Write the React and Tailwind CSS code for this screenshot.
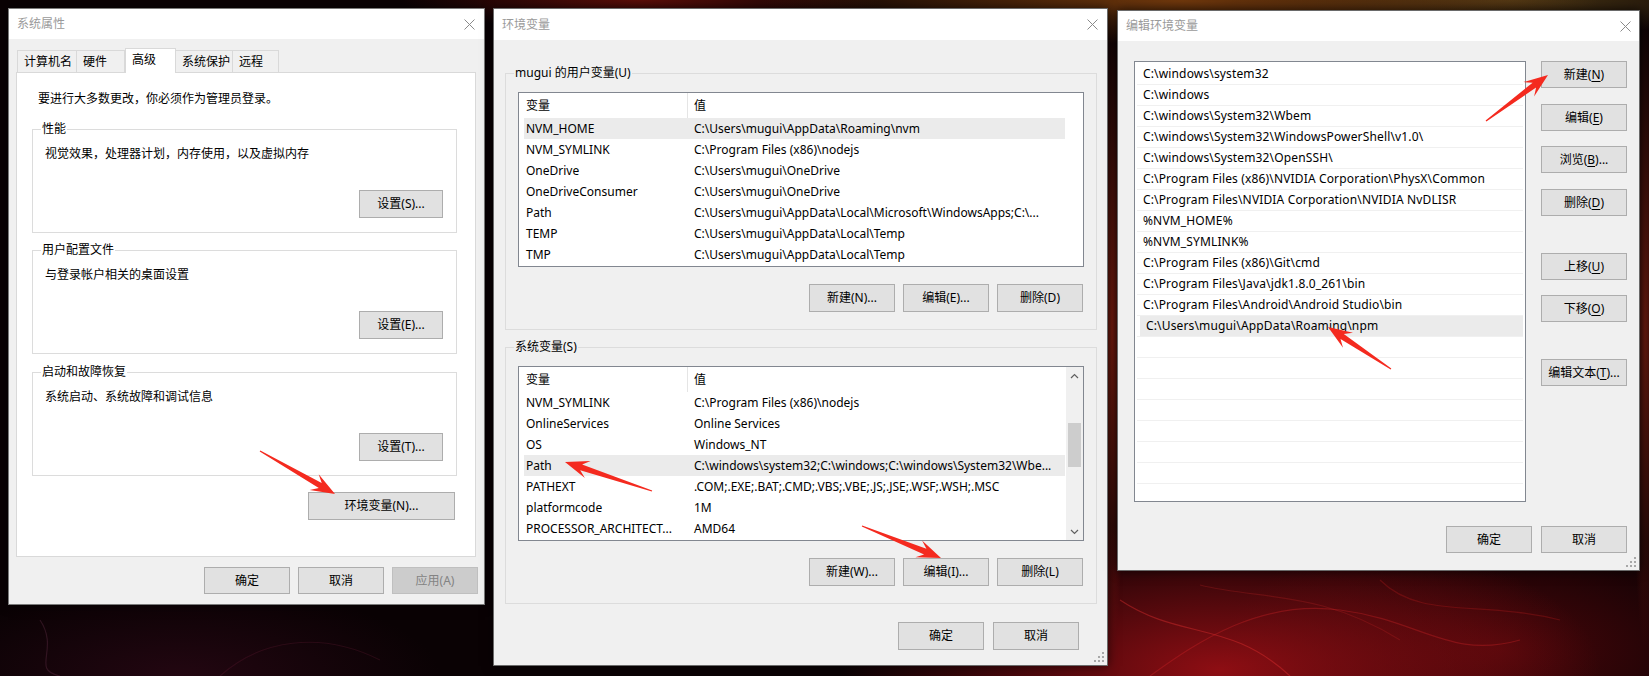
import React from 'react';

const userVars = [
  ['NVM_HOME', 'C:\\Users\\mugui\\AppData\\Roaming\\nvm'],
  ['NVM_SYMLINK', 'C:\\Program Files (x86)\\nodejs'],
  ['OneDrive', 'C:\\Users\\mugui\\OneDrive'],
  ['OneDriveConsumer', 'C:\\Users\\mugui\\OneDrive'],
  ['Path', 'C:\\Users\\mugui\\AppData\\Local\\Microsoft\\WindowsApps;C:\\...'],
  ['TEMP', 'C:\\Users\\mugui\\AppData\\Local\\Temp'],
  ['TMP', 'C:\\Users\\mugui\\AppData\\Local\\Temp'],
];

const sysVars = [
  ['NVM_SYMLINK', 'C:\\Program Files (x86)\\nodejs'],
  ['OnlineServices', 'Online Services'],
  ['OS', 'Windows_NT'],
  ['Path', 'C:\\windows\\system32;C:\\windows;C:\\windows\\System32\\Wbe...'],
  ['PATHEXT', '.COM;.EXE;.BAT;.CMD;.VBS;.VBE;.JS;.JSE;.WSF;.WSH;.MSC'],
  ['platformcode', '1M'],
  ['PROCESSOR_ARCHITECT...', 'AMD64'],
];

const pathItems = [
  'C:\\windows\\system32',
  'C:\\windows',
  'C:\\windows\\System32\\Wbem',
  'C:\\windows\\System32\\WindowsPowerShell\\v1.0\\',
  'C:\\windows\\System32\\OpenSSH\\',
  'C:\\Program Files (x86)\\NVIDIA Corporation\\PhysX\\Common',
  'C:\\Program Files\\NVIDIA Corporation\\NVIDIA NvDLISR',
  '%NVM_HOME%',
  '%NVM_SYMLINK%',
  'C:\\Program Files (x86)\\Git\\cmd',
  'C:\\Program Files\\Java\\jdk1.8.0_261\\bin',
  'C:\\Program Files\\Android\\Android Studio\\bin',
  'C:\\Users\\mugui\\AppData\\Roaming\\npm',
];

// annotation arrows, page coordinates: tail -> tip
const arrows = [
  [260, 451, 335, 494],
  [652, 491, 565, 462],
  [862, 526, 941, 558],
  [1486, 121, 1548, 75],
  [1391, 369, 1328, 327],
];

const arrowPoints = ([x1, y1, x2, y2]) => {
  const dx = x2 - x1, dy = y2 - y1;
  const L = Math.hypot(dx, dy);
  const ux = dx / L, uy = dy / L;
  const nx = -uy, ny = ux;
  const h = 21, hw = 9, sw = 3, tw = 0.6;
  const bx = x2 - ux * h, by = y2 - uy * h;
  const pts = [
    [x1 + nx * tw, y1 + ny * tw],
    [bx + ux * 4 + nx * sw, by + uy * 4 + ny * sw],
    [bx - ux * 3 + nx * hw, by - uy * 3 + ny * hw],
    [x2, y2],
    [bx - ux * 3 - nx * hw, by - uy * 3 - ny * hw],
    [bx + ux * 4 - nx * sw, by + uy * 4 - ny * sw],
    [x1 - nx * tw, y1 - ny * tw],
  ];
  return pts.map((p) => p[0].toFixed(1) + ',' + p[1].toFixed(1)).join(' ');
};

const CloseX = () => (
  <svg width="11" height="11" viewBox="0 0 11 11">
    <path d="M0.5 0.5 L10.5 10.5 M10.5 0.5 L0.5 10.5" stroke="#8a8a8a" strokeWidth="1" fill="none" />
  </svg>
);

const Grip = () => (
  <svg width="10" height="10" viewBox="0 0 10 10" className="absolute right-[3px] bottom-[3px]">
    <g fill="#a8a8a8">
      <rect x="8" y="0" width="2" height="2" />
      <rect x="4" y="4" width="2" height="2" />
      <rect x="8" y="4" width="2" height="2" />
      <rect x="0" y="8" width="2" height="2" />
      <rect x="4" y="8" width="2" height="2" />
      <rect x="8" y="8" width="2" height="2" />
    </g>
  </svg>
);

const Btn = ({ w = 'w-[86px]', h = 'h-[28px]', disabled = false, children }) => (
  <div
    className={`${w} ${h} flex items-center justify-center border text-[12px] leading-none whitespace-nowrap ${
      disabled ? 'bg-[#cccccc] border-[#bfbfbf] text-[#838383]' : 'bg-[#e1e1e1] border-[#adadad] text-black'
    }`}
  >
    {children}
  </div>
);

const U = ({ children }) => <span className="underline underline-offset-2">{children}</span>;

const TitleBar = ({ title, h, pr }) => (
  <div className={`${h} bg-white flex items-center justify-between pl-[8px] ${pr} shrink-0`}>
    <span className="text-[12px] text-[#9a9a9a]">{title}</span>
    <CloseX />
  </div>
);

const Group = ({ label, labelBg, className, children }) => (
  <div className={`relative border border-[#dcdcdc] ${className}`}>
    <span className={`absolute -top-[9px] left-[8px] px-[1px] text-[12px] leading-4 ${labelBg}`}>{label}</span>
    {children}
  </div>
);

const Chevron = ({ up }) => (
  <svg width="9" height="6" viewBox="0 0 9 6">
    <path d={up ? 'M1 5 L4.5 1.5 L8 5' : 'M1 1 L4.5 4.5 L8 1'} stroke="#606060" strokeWidth="1.2" fill="none" />
  </svg>
);

const VarList = ({ rows, selected, scroll }) => (
  <div className="w-[566px] h-[175px] border border-[#828790] bg-white flex overflow-hidden">
    <div className="w-[547px] shrink-0 flex flex-col">
      <div className="h-[25px] flex items-center shrink-0">
        <div className="w-[169px] h-full flex items-center pl-[7px] border-r border-[#e5e5e5]">变量</div>
        <div className="pl-[6px]">值</div>
      </div>
      {rows.map(([k, v], i) => (
        <div
          key={k + i}
          className={`ml-[5px] w-[541px] h-[21px] shrink-0 flex items-center whitespace-nowrap ${
            i === selected ? 'bg-[#ebebeb]' : ''
          }`}
        >
          <div className="w-[164px] pl-[2px] overflow-hidden">{k}</div>
          <div className="flex-1 pl-[6px] overflow-hidden">{v}</div>
        </div>
      ))}
    </div>
    {scroll && (
      <div className="w-[17px] ml-auto h-full bg-[#f0f0f0] flex flex-col items-center">
        <div className="h-[17px] flex items-center justify-center">
          <Chevron up />
        </div>
        <div className="flex-1 w-full flex flex-col items-center">
          <div className="mt-[39px] w-[13px] h-[44px] bg-[#cdcdcd]" />
        </div>
        <div className="h-[17px] flex items-center justify-center">
          <Chevron />
        </div>
      </div>
    )}
  </div>
);

const tabs = [
  ['计算机名', 'w-[60px]'],
  ['硬件', 'w-[48px]'],
  ['高级', 'w-[51px]'],
  ['系统保护', 'w-[57px]'],
  ['远程', 'w-[46px]'],
];

const SystemProps = () => (
  <div className="absolute left-[8px] top-[8px] w-[477px] h-[597px] border border-[#7a7a7a] bg-[#f0f0f0] flex flex-col shadow-[0_0_10px_rgba(0,0,0,0.6)]">
    <TitleBar title="系统属性" h="h-[30px]" pr="pr-[9px]" />
    <div className="flex flex-col pt-[9px]">
      <div className="flex ml-[7px] pl-[1px] h-[25px] relative z-10">
        {tabs.map(([t, w], i) =>
          i === 2 ? (
            <div key={t} className={`${w} h-[25px] bg-white border border-b-0 border-[#d9d9d9] flex items-center pl-[6px] pb-[2px]`}>
              {t}
            </div>
          ) : (
            <div key={t} className={`${w} h-[22px] mt-[2px] border border-b-0 border-[#d9d9d9] flex items-center pl-[6px] ${i === 1 || i === 3 || i === 4 ? 'border-l-0' : ''}`}>
              {t}
            </div>
          )
        )}
      </div>
      <div className="ml-[7px] -mt-px w-[460px] h-[485px] border border-[#d9d9d9] bg-white flex flex-col pl-[15px]">
        <p className="mt-[18px] ml-[6px] leading-4">要进行大多数更改，你必须作为管理员登录。</p>
        {[
          ['性能', '视觉效果，处理器计划，内存使用，以及虚拟内存', '设置(S)...', 'mt-[22px]'],
          ['用户配置文件', '与登录帐户相关的桌面设置', '设置(E)...', 'mt-[17px]'],
          ['启动和故障恢复', '系统启动、系统故障和调试信息', '设置(T)...', 'mt-[18px]'],
        ].map(([label, text, btn, mt]) => (
          <Group key={label} label={label} labelBg="bg-white" className={`${mt} w-[425px] h-[104px] flex flex-col`}>
            <p className="pt-[16px] pl-[12px] leading-4">{text}</p>
            <div className="mt-[28px] self-end mr-[13px]">
              <Btn w="w-[84px]">{btn}</Btn>
            </div>
          </Group>
        ))}
        <div className="mt-[16px] ml-[276px]">
          <Btn w="w-[147px]">环境变量(N)...</Btn>
        </div>
      </div>
      <div className="mt-[10px] flex justify-end gap-[8px] pr-[6px]">
        <Btn h="h-[27px]">确定</Btn>
        <Btn h="h-[27px]">取消</Btn>
        <Btn h="h-[27px]" disabled>应用(A)</Btn>
      </div>
    </div>
  </div>
);

const EnvVars = () => (
  <div className="absolute left-[493px] top-[8px] w-[615px] h-[658px] border border-[#6a6a6a] bg-[#f0f0f0] flex flex-col shadow-[0_0_10px_rgba(0,0,0,0.6)]">
    <TitleBar title="环境变量" h="h-[31px]" pr="pr-[9px]" />
    <div className="flex flex-col pt-[33px] pl-[11px]">
      <Group label="mugui 的用户变量(U)" labelBg="bg-[#f0f0f0]" className="w-[592px] h-[257px] flex flex-col pt-[18px] pl-[12px]">
        <VarList rows={userVars} selected={0} />
        <div className="mt-[17px] flex justify-end gap-[8px] pr-[13px]">
          <Btn>新建(N)...</Btn>
          <Btn>编辑(E)...</Btn>
          <Btn>删除(D)</Btn>
        </div>
      </Group>
      <Group label="系统变量(S)" labelBg="bg-[#f0f0f0]" className="mt-[17px] w-[592px] h-[257px] flex flex-col pt-[18px] pl-[12px]">
        <VarList rows={sysVars} selected={3} scroll />
        <div className="mt-[17px] flex justify-end gap-[8px] pr-[13px]">
          <Btn>新建(W)...</Btn>
          <Btn>编辑(I)...</Btn>
          <Btn>删除(L)</Btn>
        </div>
      </Group>
      <div className="mt-[18px] flex justify-end gap-[9px] pr-[28px]">
        <Btn>确定</Btn>
        <Btn>取消</Btn>
      </div>
    </div>
    <Grip />
  </div>
);

const sideButtons = [
  [<>新建(<U>N</U>)</>, 'mt-0'],
  [<>编辑(<U>E</U>)</>, 'mt-[16px]'],
  [<>浏览(<U>B</U>)...</>, 'mt-[15px]'],
  [<>删除(<U>D</U>)</>, 'mt-[16px]'],
  [<>上移(<U>U</U>)</>, 'mt-[37px]'],
  [<>下移(<U>O</U>)</>, 'mt-[15px]'],
  [<>编辑文本(<U>T</U>)...</>, 'mt-[37px]'],
];

const EditEnv = () => (
  <div className="absolute left-[1117px] top-[10px] w-[523px] h-[561px] border border-[#6a6a6a] bg-[#f0f0f0] flex flex-col shadow-[0_0_10px_rgba(0,0,0,0.6)]">
    <TitleBar title="编辑环境变量" h="h-[30px]" pr="pr-[8px]" />
    <div className="flex pt-[20px] pl-[16px]">
      <div className="w-[392px] h-[441px] border border-[#828790] bg-white flex flex-col pt-[2px] overflow-hidden">
        {Array.from({ length: 21 }).map((_, i) => (
          <div key={i} className="mx-[2px] h-[21px] shrink-0 border-b border-[#f0f0f0] flex">
            <div
              className={`flex-1 flex items-center pl-[6px] whitespace-nowrap overflow-hidden tracking-[0.15px] ${
                i === 12 ? 'bg-[#ebebeb] ml-[3px] pl-[3px]' : ''
              }`}
            >
              {pathItems[i] || ''}
            </div>
          </div>
        ))}
      </div>
      <div className="ml-[15px] flex flex-col">
        {sideButtons.map(([label, mt], i) => (
          <div key={i} className={mt}>
            <Btn h="h-[27px]">{label}</Btn>
          </div>
        ))}
      </div>
    </div>
    <div className="mt-[24px] flex justify-end gap-[9px] pr-[12px]">
      <Btn h="h-[27px]">确定</Btn>
      <Btn h="h-[27px]">取消</Btn>
    </div>
    <Grip />
  </div>
);

export default function App() {
  return (
    <div className="relative w-[1649px] h-[676px] overflow-hidden bg-[#0a0204] text-[12px] text-black font-['Noto_Sans','Noto_Sans_CJK_SC',sans-serif]">
      {/* desktop wallpaper */}
      <div className="absolute inset-0 bg-[radial-gradient(ellipse_380px_150px_at_1220px_670px,rgba(165,16,22,0.85),transparent),radial-gradient(ellipse_280px_130px_at_1500px_650px,rgba(100,8,12,0.7),transparent),radial-gradient(ellipse_420px_44px_at_1180px_0px,rgba(130,66,14,0.85),transparent),radial-gradient(ellipse_280px_34px_at_1510px_0px,rgba(100,76,28,0.7),transparent),radial-gradient(ellipse_240px_30px_at_640px_0px,rgba(120,18,10,0.75),transparent),radial-gradient(ellipse_260px_90px_at_180px_676px,rgba(55,10,28,0.55),transparent),radial-gradient(ellipse_14px_320px_at_1112px_330px,rgba(170,40,20,0.7),transparent),radial-gradient(ellipse_14px_320px_at_1645px_330px,rgba(160,40,20,0.6),transparent)]" />
      <svg className="absolute inset-0" width="1649" height="676" viewBox="0 0 1649 676">
        <g fill="none" strokeWidth="1.2">
          <path d="M1120 600 C 1180 640, 1230 620, 1290 676" stroke="rgba(230,50,50,0.4)" />
          <path d="M1150 676 C 1200 640, 1260 600, 1340 610 S 1450 660, 1520 640" stroke="rgba(210,36,40,0.35)" />
          <path d="M1380 580 C 1420 620, 1480 600, 1560 620" stroke="rgba(190,30,30,0.3)" />
          <path d="M1200 585 C 1260 600, 1320 590, 1400 640" stroke="rgba(200,40,40,0.25)" />
          <path d="M40 620 C 60 650, 30 670, 60 676" stroke="rgba(120,60,90,0.3)" />
          <path d="M220 676 C 260 640, 320 630, 380 660" stroke="rgba(110,30,60,0.25)" />
        </g>
      </svg>

      <SystemProps />
      <EnvVars />
      <EditEnv />

      {/* red annotation arrows */}
      <svg className="absolute inset-0 z-20 pointer-events-none" width="1649" height="676" viewBox="0 0 1649 676">
        {arrows.map((a, i) => (
          <polygon key={i} points={arrowPoints(a)} fill="#f42a1f" />
        ))}
      </svg>
    </div>
  );
}
